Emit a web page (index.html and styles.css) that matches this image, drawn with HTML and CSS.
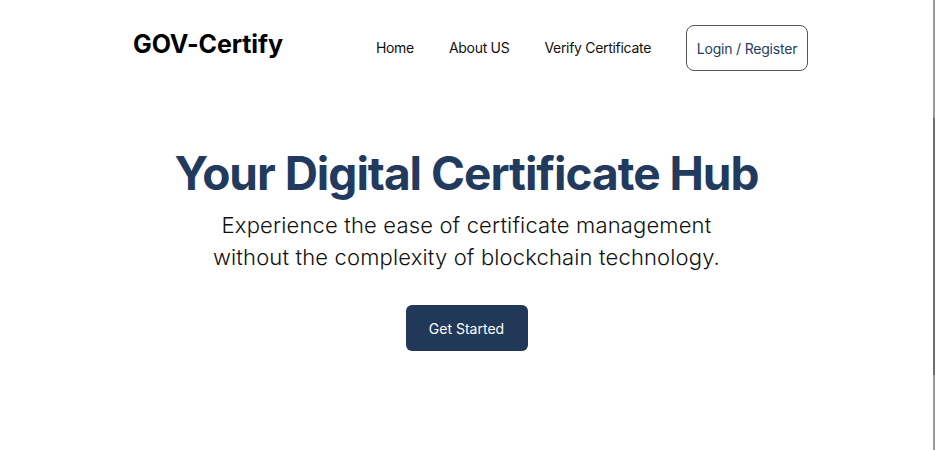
FILE: index.html
```html
<!DOCTYPE html>
<html lang="en">
<head>
<meta charset="utf-8">
<title>GOV-Certify</title>
<link rel="stylesheet" href="styles.css">
</head>
<body>
<div class="page">
  <div class="main">
    <header class="header">
      <div class="logo">GOV-Certify</div>
      <nav class="nav">
        <a class="nav-link" href="#">Home</a>
        <a class="nav-link" href="#">About US</a>
        <a class="nav-link" href="#">Verify Certificate</a>
        <a class="login" href="#">Login / Register</a>
      </nav>
    </header>
    <section class="hero">
      <h1 class="title">Your Digital Certificate Hub</h1>
      <p class="subtitle">Experience the ease of certificate management<br>without the complexity of blockchain technology.</p>
      <a class="cta" href="#">Get Started</a>
    </section>
  </div>
  <div class="edge"></div>
</div>
</body>
</html>
```
FILE: styles.css
```css
* { box-sizing: border-box; }
html, body { margin: 0; padding: 0; background: #ffffff; }
body { font-family: "Inter", "Open Sans", sans-serif; color: #111; }
.page { display: flex; height: 450px; overflow: hidden; }
.main { flex: 1; }
.edge {
  width: 2px;
  background: linear-gradient(to bottom, #9a9a9a 0, #9a9a9a 118px, #6e6e6e 118px, #6e6e6e 375px, #9a9a9a 375px);
}
.header {
  display: flex;
  align-items: center;
  justify-content: space-between;
  padding: 25px 125px 0 133px;
}
.logo { font-size: 25px; font-weight: 700; color: #000; margin-top: -8px; letter-spacing: -0.1px; }
.nav { display: flex; align-items: center; gap: 35px; }
.nav-link { font-size: 14px; color: #111; text-decoration: none; margin-top: -2px; letter-spacing: -0.3px; }
.login {
  display: flex; align-items: center; justify-content: center;
  width: 122px; height: 46px;
  border: 1px solid #555;
  border-radius: 8px;
  font-size: 14px; color: #263d63; text-decoration: none; letter-spacing: -0.2px;
}
.hero { display: flex; flex-direction: column; align-items: center; padding-top: 72px; }
.title { margin: 0; font-size: 46px; font-weight: 700; color: #223a5e; line-height: 60px; letter-spacing: -1px; }
.subtitle { margin: 6px 0 0; font-size: 22px; font-weight: 300; line-height: 32px; text-align: center; color: #111; letter-spacing: 0.15px; }
.cta {
  display: flex; align-items: center; justify-content: center;
  margin-top: 32px;
  width: 122px; height: 46px;
  background: #213859; color: #fff;
  border-radius: 6px;
  font-size: 14px; text-decoration: none;
}
```
